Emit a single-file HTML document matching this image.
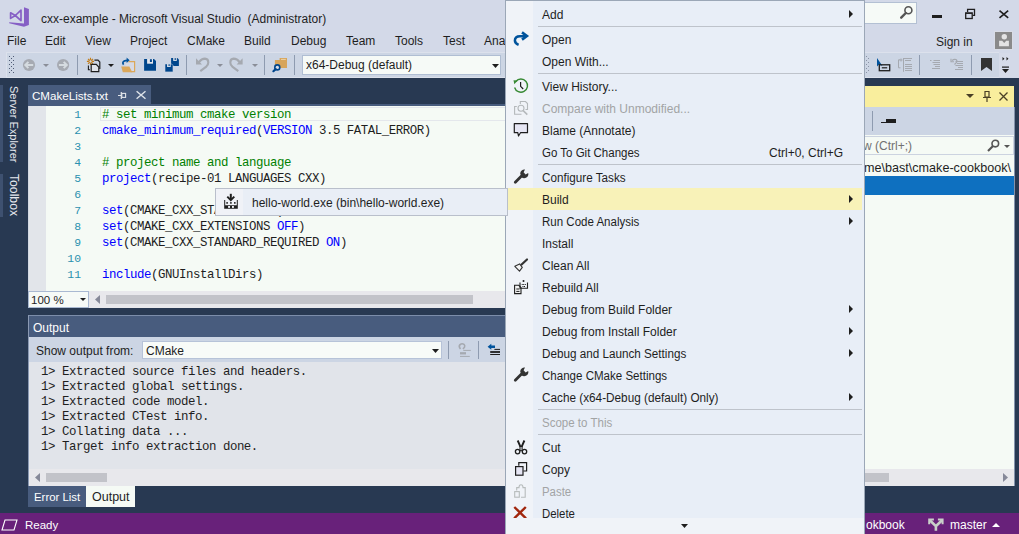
<!DOCTYPE html>
<html><head><meta charset="utf-8">
<style>
html,body{margin:0;padding:0}
body{width:1019px;height:534px;overflow:hidden;position:relative;background:#D3D9E8;font-family:"Liberation Sans",sans-serif}
.a{position:absolute}
.t{position:absolute;font-size:12px;white-space:pre;line-height:14px;color:#1E1E1E}
.m{position:absolute;font-family:"Liberation Mono",monospace;font-size:12.4px;letter-spacing:-0.44px;white-space:pre;line-height:16px;color:#1E1E1E}
svg{position:absolute;overflow:visible}
.kw{color:#0000FF}
.cm{color:#008000}
</style></head><body>

<!-- ===== TITLE BAR ===== -->
<svg style="left:0;top:0" width="34" height="30" viewBox="0 0 34 30">
  <path d="M24 7.2 L28.9 9 L28.9 25 L24 26.8 L9.2 23.2 L9.2 22.3 L24 23.4 Z" fill="#865FC5"/>
  <path d="M10.6 12.8 L10.6 18.4 L15.3 15.5 Z M21 10.2 L21 20.6 L15.3 15.5 Z" fill="none" stroke="#865FC5" stroke-width="1.7" stroke-linejoin="round"/>
</svg>
<div class="t" style="left:41px;top:12px;color:#1E1E1E">cxx-example - Microsoft Visual Studio  (Administrator)</div>

<!-- search box (partially visible) -->
<div class="a" style="left:850px;top:2px;width:67px;height:22px;background:#F6FAF7;border:1px solid #B3C0D3;box-sizing:border-box"></div>
<svg style="left:0;top:0" width="1019" height="30" viewBox="0 0 1019 30">
  <circle cx="908.4" cy="10.3" r="3.5" fill="none" stroke="#555" stroke-width="1.6"/>
  <path d="M905.8 13 L901.2 17.7" stroke="#555" stroke-width="2.4" stroke-linecap="round"/>
</svg>
<!-- window buttons -->
<div class="a" style="left:932px;top:15px;width:10px;height:3px;background:#1E1E1E"></div>
<svg style="left:0;top:0" width="1019" height="30" viewBox="0 0 1019 30">
  <path d="M967.6 12 V9.4 H974.5 V15.3 H972.6" fill="none" stroke="#1E1E1E" stroke-width="1.3"/>
  <rect x="965.7" y="12.9" width="6.5" height="5.6" fill="none" stroke="#1E1E1E" stroke-width="1.3"/>
  <path d="M965.7 13.4 H972.2" stroke="#1E1E1E" stroke-width="1"/>
</svg>
<svg style="left:0;top:0" width="1019" height="30" viewBox="0 0 1019 30">
  <path d="M999.5 10.6 L1008.2 17.9 M1008.2 10.6 L999.5 17.9" stroke="#1E1E1E" stroke-width="1.6"/>
</svg>

<!-- ===== MENU BAR ===== -->
<div class="t" style="left:7px;top:34px">File</div>
<div class="t" style="left:45px;top:34px">Edit</div>
<div class="t" style="left:85px;top:34px">View</div>
<div class="t" style="left:130px;top:34px">Project</div>
<div class="t" style="left:187px;top:34px">CMake</div>
<div class="t" style="left:244px;top:34px">Build</div>
<div class="t" style="left:291px;top:34px">Debug</div>
<div class="t" style="left:346px;top:34px">Team</div>
<div class="t" style="left:395px;top:34px">Tools</div>
<div class="t" style="left:443px;top:34px">Test</div>
<div class="t" style="left:484px;top:34px">Analyze</div>
<div class="t" style="left:936px;top:35px">Sign in</div>
<div class="a" style="left:994px;top:31px;width:19px;height:19px;background:#D9DDE6"></div>
<div class="a" style="left:995px;top:32px;width:17px;height:17px;background:#8A8A8A"></div>
<svg style="left:0;top:0" width="1019" height="60" viewBox="0 0 1019 60">
  <circle cx="1004.3" cy="36.8" r="2.7" fill="#E4E4E4"/>
  <path d="M999.1 40.7 H1002.2 L1004.2 43 L1006.2 40.7 H1008.9 V46.3 H999.1 Z" fill="#E4E4E4"/>
</svg>

<!-- ===== TOOLBAR ===== -->
<div class="a" style="left:6px;top:52px;width:993px;height:26px;background:#DCE1EC"></div>
<div class="a" style="left:7px;top:53px;width:992px;height:24px;background:#CCD5E4"></div>
<div class="a" style="left:999px;top:53px;width:11px;height:24px;background:#D6DBE9"></div>

<!-- toolbar icons -->
<svg style="left:0;top:0" width="20" height="80" viewBox="0 0 20 80"><g fill="#4F5B75"><rect x="9" y="56" width="1" height="1"/><rect x="13" y="56" width="1" height="1"/><rect x="11" y="58" width="1" height="1"/><rect x="9" y="60" width="1" height="1"/><rect x="13" y="60" width="1" height="1"/><rect x="11" y="62" width="1" height="1"/><rect x="9" y="64" width="1" height="1"/><rect x="13" y="64" width="1" height="1"/><rect x="11" y="66" width="1" height="1"/><rect x="9" y="68" width="1" height="1"/><rect x="13" y="68" width="1" height="1"/><rect x="11" y="70" width="1" height="1"/><rect x="9" y="72" width="1" height="1"/><rect x="13" y="72" width="1" height="1"/></g></svg>
<svg style="left:0;top:0" width="100" height="80" viewBox="0 0 100 80">
  <circle cx="29" cy="65" r="6.1" fill="#A6AAB2"/>
  <path d="M25.5 65 H33.2 M28.4 61.9 L25.3 65 L28.4 68.1" fill="none" stroke="#D5DBE0" stroke-width="2"/>
  <circle cx="63.1" cy="65" r="6.1" fill="#A6AAB2"/>
  <path d="M66.6 65 H58.9 M63.7 61.9 L66.8 65 L63.7 68.1" fill="none" stroke="#D5DBE0" stroke-width="2"/>
</svg>
<svg style="left:43px;top:64px" width="6" height="3" viewBox="0 0 6 3"><path d="M0 0 H6 L3 3 Z" fill="#8A8E98"/></svg>

<div class="a" style="left:77px;top:55px;width:1px;height:20px;background:#8E9BB0"></div>
<svg style="left:0;top:0" width="200" height="80" viewBox="0 0 200 80">
  <g stroke="#C27D1A" stroke-width="1.1"><path d="M90.5 57.8 V65 M86.9 61.4 H94.1 M88 58.9 L93 63.9 M93 58.9 L88 63.9"/></g>
  <circle cx="90.5" cy="61.4" r="1.6" fill="#CCD5E4" stroke="#C27D1A" stroke-width="1"/>
  <path d="M94.4 60.2 H98 L99.8 62 V69" fill="none" stroke="#1E1E1E" stroke-width="1.2"/>
  <path d="M91.2 64.4 H96.2 L98.8 67 V71.7 H91.2 Z" fill="#E0E3EA" stroke="#1E1E1E" stroke-width="1.2"/>
  <path d="M88.4 65.5 V69.7 H90" fill="none" stroke="#1E1E1E" stroke-width="1.1"/>
</svg>
<svg style="left:108px;top:64px" width="6" height="3" viewBox="0 0 6 3"><path d="M0 0 H6 L3 3 Z" fill="#1E1E1E"/></svg>
<svg style="left:0;top:0" width="200" height="80" viewBox="0 0 200 80">
  <path d="M128.5 61.6 H134.6 V71.6 H130.5" fill="#D6DAE6" stroke="#DCA85A" stroke-width="1.2"/>
  <path d="M125.5 63.2 H128.8 V66.8 H125.5 Z" fill="#D6DAE6"/>
  <path d="M121.2 66.6 H129.3 L132.3 72.2 H122.8 Z" fill="#DCA85A"/>
  <path d="M123.6 64.6 Q121.8 62.5 124.3 61 Q125.5 60.3 127.5 60.3" fill="none" stroke="#00539C" stroke-width="1.7"/>
  <path d="M126.6 57.6 L129.6 60.3 L126.6 63 Z" fill="#00539C"/>
</svg>
<svg style="left:0;top:0" width="300" height="80" viewBox="0 0 300 80">
  <path d="M144.1 59 H154 L156 61 V70.8 H144.1 Z" fill="#00468C"/>
  <rect x="147.1" y="59" width="5.9" height="4.7" fill="#E4E6EC"/>
  <rect x="149.9" y="59.2" width="2" height="2.8" fill="#00468C"/>
</svg>
<svg style="left:0;top:0" width="300" height="80" viewBox="0 0 300 80">
  <path d="M171.1 57.9 H177.4 L178.9 59.4 V65.9 H171.1 Z" fill="#00468C"/>
  <rect x="173.2" y="57.9" width="3.6" height="3" fill="#E4E6EC"/><rect x="174.6" y="58.1" width="1.2" height="1.9" fill="#00468C"/>
  <path d="M165 63.9 H171.5 L173 65.4 V71.9 H165 Z" fill="#00468C" stroke="#CCD5E4" stroke-width="0.6"/>
  <rect x="167.1" y="64" width="3.6" height="3" fill="#E4E6EC"/><rect x="168.5" y="64.2" width="1.2" height="1.9" fill="#00468C"/>
</svg>
<div class="a" style="left:186px;top:55px;width:1px;height:20px;background:#8E9BB0"></div>
<svg style="left:0;top:0" width="300" height="80" viewBox="0 0 300 80">
  <g>
  <path d="M198.8 62.3 Q201.5 58.6 205 58.6 Q208.3 58.8 208.3 62.4 Q208.3 64.6 206.3 66.6 L200.3 71.2" fill="none" stroke="#A5A9B0" stroke-width="2.1"/>
  <path d="M196 58.2 L196 64.4 L202 64.4 Z" fill="#A5A9B0"/>
  </g>
</svg>
<svg style="left:217px;top:64px" width="6" height="3" viewBox="0 0 6 3"><path d="M0 0 H6 L3 3 Z" fill="#8A8E98"/></svg>
<svg style="left:0;top:0" width="300" height="80" viewBox="0 0 300 80">
  <g transform="translate(438.6,0) scale(-1,1)">
  <path d="M198.8 62.3 Q201.5 58.6 205 58.6 Q208.3 58.8 208.3 62.4 Q208.3 64.6 206.3 66.6 L200.3 71.2" fill="none" stroke="#A5A9B0" stroke-width="2.1"/>
  <path d="M196 58.2 L196 64.4 L202 64.4 Z" fill="#A5A9B0"/>
  </g>
</svg>
<svg style="left:252px;top:64px" width="6" height="3" viewBox="0 0 6 3"><path d="M0 0 H6 L3 3 Z" fill="#8A8E98"/></svg>
<div class="a" style="left:264px;top:55px;width:1px;height:20px;background:#8E9BB0"></div>
<svg style="left:0;top:0" width="300" height="80" viewBox="0 0 300 80">
  <path d="M279.6 57.9 H287 V68 H274.9 V60 H279.6 Z" fill="#D7A55C"/>
  <rect x="281" y="58.9" width="4.8" height="1" fill="#ECD3A8"/>
  <circle cx="277.3" cy="67.4" r="2.5" fill="#DADDE5" stroke="#00468C" stroke-width="1.6"/>
  <path d="M275.6 69.1 L273.4 71.2" stroke="#00468C" stroke-width="2.2" stroke-linecap="round"/>
</svg>
<div class="a" style="left:294px;top:55px;width:1px;height:20px;background:#8E9BB0"></div>
<div class="a" style="left:302px;top:55px;width:199px;height:20px;background:#F6FAF7;border:1px solid #B0BED3;box-sizing:border-box"></div>
<div class="t" style="left:306px;top:58px">x64-Debug (default)</div>
<svg style="left:492px;top:64px" width="7" height="4" viewBox="0 0 7 4"><path d="M0 0 H7 L3.5 4 Z" fill="#1E1E1E"/></svg>

<!-- right toolbar icons -->
<svg style="left:866px;top:56px" width="4" height="18" viewBox="0 0 4 18"><g fill="#8A93A6"><rect x="0" y="0" width="1" height="1"/><rect x="2" y="2" width="1" height="1"/><rect x="0" y="4" width="1" height="1"/><rect x="2" y="6" width="1" height="1"/><rect x="0" y="8" width="1" height="1"/><rect x="2" y="10" width="1" height="1"/><rect x="0" y="12" width="1" height="1"/><rect x="2" y="14" width="1" height="1"/><rect x="0" y="16" width="1" height="1"/></g></svg>
<svg style="left:876px;top:58px" width="16" height="14" viewBox="0 0 16 14">
  <path d="M1 0 L1 8.5 L3 6.5 L6.5 8 Z" fill="#00539C"/>
  <rect x="3.3" y="6.8" width="10.4" height="5.9" fill="none" stroke="#1E1E1E" stroke-width="1.3"/>
  <path d="M5.8 9.8 H11.2" stroke="#1E1E1E" stroke-width="1.2"/>
</svg>
<svg style="left:0;top:0" width="1019" height="80" viewBox="0 0 1019 80">
 <g stroke="#A5A9B0" stroke-width="1" fill="none">
  <path d="M900 59.8 H898.5 V67.8 H900.5"/>
  <path d="M901 58.5 V61.5 M899.5 60 H902.5"/>
  <path d="M903.5 58 V71.8 M903.5 58.5 H912"/>
  <path d="M905 60.5 H911 M905 64.5 H912 M905 66.5 H912 M905 68.5 H912 M905 70.5 H912"/>
  <path d="M930 60.5 H931.5 M933.5 60.5 H940 M932.5 62.5 H940 M933.5 64.5 H940 M935 66.5 H940 M932 68.5 H940"/>
  <path d="M955.5 61.5 H963 M957 63.5 H963 M955.5 65.5 H963 M958 67.5 H963 M955 69.5 H963"/>
  <path d="M952 60.5 Q954 58.8 956 59.5 Q957.5 60.5 956.5 62.5 L954.5 64.5" stroke-width="1.2"/>
  <path d="M951 58.8 V61.8 H954" stroke-width="1.1"/>
 </g>
</svg>
<div class="a" style="left:919px;top:55px;width:1px;height:20px;background:#8E9BB0"></div>


<div class="a" style="left:971px;top:55px;width:1px;height:20px;background:#8E9BB0"></div>
<svg style="left:981px;top:58px" width="11" height="13" viewBox="0 0 11 13"><path d="M0 0 H11 V13 L5.5 9 L0 13 Z" fill="#333"/></svg>
<svg style="left:1001px;top:56px" width="9" height="20" viewBox="0 0 9 20">
  <path d="M1.5 1 L3.5 2.8 L1.5 4.6 Z M5.5 1 L7.5 2.8 L5.5 4.6 Z" fill="#1E1E1E"/>
  <rect x="1" y="10.5" width="7" height="1.2" fill="#1E1E1E"/><path d="M1 13 H8 L4.5 17 Z" fill="#1E1E1E"/>
</svg>

<!-- ===== DARK WELL ===== -->
<div class="a" style="left:0;top:78px;width:1019px;height:435px;background:#283952"></div>

<!-- left auto-hide tabs -->
<div class="a" style="left:0;top:85px;width:3px;height:77px;background:#3E5170"></div>
<div class="a" style="left:0;top:174px;width:3px;height:43px;background:#3E5170"></div>
<div class="t" style="left:21px;top:86px;color:#E6E8EE;font-size:11px;transform-origin:0 0;transform:rotate(90deg)">Server Explorer</div>
<div class="t" style="left:21px;top:174px;color:#E6E8EE;font-size:12.2px;transform-origin:0 0;transform:rotate(90deg)">Toolbox</div>

<!-- ===== DOCUMENT TAB ===== -->
<div class="a" style="left:28px;top:85px;width:123px;height:19px;background:#485C7E"></div>
<div class="a" style="left:28px;top:104px;width:840px;height:2px;background:#485C7E"></div>
<div class="t" style="left:32px;top:89px;color:#FFFFFF;font-size:11.6px">CMakeLists.txt</div>
<svg style="left:0;top:0" width="200" height="110" viewBox="0 0 200 110">
  <path d="M118 95.5 H121.3 M121.3 92 V99" stroke="#E0E4E8" stroke-width="1.2"/>
  <rect x="121.8" y="93.4" width="3.8" height="4" fill="none" stroke="#E0E4E8" stroke-width="1.1"/>
</svg>
<svg style="left:0;top:0" width="200" height="110" viewBox="0 0 200 110">
  <path d="M136.6 91.2 L145.5 98.7 M145.5 91.2 L136.6 98.7" stroke="#DDE2E8" stroke-width="1.5"/>
</svg>


<!-- ===== EDITOR ===== -->
<div class="a" style="left:28px;top:106px;width:840px;height:185px;background:#F5FAF5"></div>
<div class="a" style="left:28px;top:106px;width:18px;height:185px;background:#E2E5EA"></div>
<div class="a" style="left:28px;top:106px;width:1px;height:185px;background:#D3D9E3"></div>
<div class="a" style="left:100px;top:107px;width:770px;height:14px;border:1px solid #E4E7EC;box-sizing:border-box"></div>
<div class="m" style="left:46px;top:107px;width:35.2px;text-align:right;color:#2B91AF;font-size:11.4px;letter-spacing:0.16px">1
2
3
4
5
6
7
8
9
10
11</div>
<div class="m" style="left:102px;top:107px"><span class="cm"># set minimum cmake version</span>
<span class="kw">cmake_minimum_required</span>(<span class="kw">VERSION</span> 3.5 FATAL_ERROR)

<span class="cm"># project name and language</span>
<span class="kw">project</span>(recipe-01 LANGUAGES CXX)

<span class="kw">set</span>(CMAKE_CXX_STANDARD 11)
<span class="kw">set</span>(CMAKE_CXX_EXTENSIONS <span class="kw">OFF</span>)
<span class="kw">set</span>(CMAKE_CXX_STANDARD_REQUIRED <span class="kw">ON</span>)

<span class="kw">include</span>(GNUInstallDirs)</div>
<!-- editor bottom bar -->
<div class="a" style="left:28px;top:291px;width:840px;height:17px;background:#E8E8EC"></div>
<div class="a" style="left:28px;top:291px;width:61px;height:17px;background:#F6FAF7;border:1px solid #A9B9D2;box-sizing:border-box"></div>
<div class="t" style="left:31px;top:293px;font-size:11.5px">100 %</div>
<svg style="left:80px;top:298px" width="6" height="3" viewBox="0 0 6 3"><path d="M0 0 H6 L3 3 Z" fill="#1E1E1E"/></svg>
<svg style="left:95px;top:295px" width="5" height="9" viewBox="0 0 5 9"><path d="M5 0 V9 L0 4.5 Z" fill="#868999"/></svg>
<div class="a" style="left:106px;top:295px;width:367px;height:9px;background:#C2C3C9"></div>

<!-- ===== OUTPUT PANEL ===== -->
<div class="a" style="left:28px;top:315px;width:840px;height:1px;background:#7C8DAA"></div>
<div class="a" style="left:28px;top:316px;width:840px;height:21px;background:#485C7E"></div>
<div class="t" style="left:33px;top:321px;color:#FFFFFF">Output</div>
<div class="a" style="left:28px;top:337px;width:840px;height:25px;background:#CCD5E4"></div>
<div class="t" style="left:36px;top:344px">Show output from:</div>
<div class="a" style="left:142px;top:341px;width:300px;height:18px;background:#F8FBF8;border:1px solid #B7C3D8;box-sizing:border-box"></div>
<div class="t" style="left:146px;top:344px">CMake</div>
<svg style="left:432px;top:349px" width="7" height="4" viewBox="0 0 7 4"><path d="M0 0 H7 L3.5 4 Z" fill="#1E1E1E"/></svg>
<div class="a" style="left:448px;top:341px;width:1px;height:18px;background:#8E9BB0"></div>
<svg style="left:0;top:0" width="520" height="370" viewBox="0 0 520 370">
  <g fill="none" stroke="#A5A9B0">
  <path d="M460.5 349 Q458.3 346.5 460 344.6 Q462 343 464 344.3 Q465.2 345.5 464.5 347.2 L463 349" stroke-width="1.6"/>
  <path d="M463.3 350.4 H470.8 M460 356.4 H469.8" stroke-width="1"/>
  <path d="M460 353.3 H466" stroke-width="2.3"/>
  </g>
</svg>
<div class="a" style="left:478px;top:341px;width:1px;height:18px;background:#8E9BB0"></div>
<svg style="left:0;top:0" width="520" height="370" viewBox="0 0 520 370">
  <path d="M487.6 346.8 L491.3 343.8 V345.6 H495 V348 H491.3 V349.8 Z" fill="#00539C"/>
  <path d="M494.4 349.4 H500 M490.2 354.5 H500" stroke="#1E1E1E" stroke-width="1"/>
  <path d="M490.2 352 H500" stroke="#1E1E1E" stroke-width="1.8"/>
</svg>
<div class="a" style="left:28px;top:362px;width:840px;height:107px;background:#E1E4EA"></div>
<div class="m" style="left:41px;top:365px;line-height:15px;color:#1E1E1E">1&gt; Extracted source files and headers.
1&gt; Extracted global settings.
1&gt; Extracted code model.
1&gt; Extracted CTest info.
1&gt; Collating data ...
1&gt; Target info extraction done.</div>
<div class="a" style="left:28px;top:469px;width:840px;height:17px;background:#E8E8EC"></div>
<svg style="left:35px;top:473px" width="5" height="9" viewBox="0 0 5 9"><path d="M5 0 V9 L0 4.5 Z" fill="#868999"/></svg>
<div class="a" style="left:46px;top:473px;width:61px;height:9px;background:#C2C3C9"></div>
<div class="a" style="left:28px;top:315px;width:1px;height:171px;background:#8A99B3"></div>
<!-- bottom tabs -->
<div class="a" style="left:28px;top:486px;width:58px;height:21px;background:#485C7E"></div>
<div class="t" style="left:34px;top:490px;color:#FFFFFF;font-size:11.4px">Error List</div>
<div class="a" style="left:86px;top:486px;width:49px;height:21px;background:#F5FAF5"></div>
<div class="t" style="left:92px;top:490px;color:#1E1E1E;font-size:12.5px">Output</div>

<!-- ===== STATUS BAR ===== -->
<div class="a" style="left:0;top:513px;width:1019px;height:21px;background:#68217A"></div>
<svg style="left:1px;top:519px" width="17" height="12" viewBox="0 0 17 12">
  <path d="M4 1 H16 L13 11 H1 Z" fill="none" stroke="#FFFFFF" stroke-width="1.1"/>
</svg>
<div class="t" style="left:25px;top:518px;color:#FFFFFF;font-size:11.5px">Ready</div>
<div class="t" style="left:866px;top:518px;color:#FFFFFF">okbook</div>
<svg style="left:0;top:500px" width="1019" height="34" viewBox="0 500 1019 34">
  <g fill="none" stroke="#C9CFC9">
  <path d="M929.8 520.3 L935.9 526.3 L942 520.3 M935.9 526 V530.8" stroke-width="2.6"/>
  <path d="M929.2 524.3 V519.6 H933.9 M942.6 524.3 V519.6 H937.9" stroke-width="2"/>
  </g>
</svg>
<div class="t" style="left:950px;top:518px;color:#FFFFFF">master</div>
<svg style="left:992px;top:523px" width="8" height="4" viewBox="0 0 8 4"><path d="M0 4 H8 L4 0 Z" fill="#FFFFFF"/></svg>


<!-- ===== RIGHT TOOL WINDOW (Solution Explorer) ===== -->
<div class="a" style="left:865px;top:86px;width:149px;height:400px;background:#F5FAF5"></div>
<div class="a" style="left:865px;top:86px;width:149px;height:21px;background:#F9EE9D"></div>
<svg style="left:966px;top:94px" width="8" height="4" viewBox="0 0 8 4"><path d="M0 0 H8 L4 4 Z" fill="#4A4026"/></svg>
<svg style="left:983px;top:91px" width="8" height="11" viewBox="0 0 8 11">
  <path d="M2 0.5 H6 V6 H2 Z M0 6.5 H8 M4 7 V11" fill="none" stroke="#4A4026" stroke-width="1.2"/>
</svg>
<svg style="left:999px;top:92px" width="9" height="9" viewBox="0 0 9 9">
  <path d="M0.5 0.5 L8.5 8.5 M8.5 0.5 L0.5 8.5" stroke="#4A4026" stroke-width="1.3"/>
</svg>
<div class="a" style="left:865px;top:107px;width:149px;height:28px;background:#CCD5E4"></div>
<div class="a" style="left:872px;top:111px;width:1px;height:20px;background:#8E9BB0"></div>
<svg style="left:881px;top:119px" width="15" height="4" viewBox="0 0 15 4"><path d="M0 3.5 H15" stroke="#1E1E1E" stroke-width="1"/><rect x="5" y="0" width="10" height="4" fill="#1E1E1E"/></svg>
<div class="a" style="left:865px;top:136px;width:149px;height:19px;background:#F5FAF5;border:1px solid #CCD3E0;border-left:none;box-sizing:border-box"></div>
<div class="t" style="right:107px;top:139px;color:#717171">Search Folder View (Ctrl+;)</div>
<svg style="left:987px;top:139px" width="13" height="13" viewBox="0 0 13 13">
  <circle cx="8.3" cy="4.6" r="3.3" fill="none" stroke="#555" stroke-width="1.6"/>
  <path d="M6 7 L1 12" stroke="#555" stroke-width="2.2"/>
</svg>
<svg style="left:1004px;top:145px" width="6" height="3" viewBox="0 0 6 3"><path d="M0 0 H6 L3 3 Z" fill="#555"/></svg>
<div class="t" style="right:8px;top:161px;color:#1E1E1E;font-size:12.6px">C:\Users\home\bast\cmake-cookbook\</div>
<div class="a" style="left:865px;top:176px;width:149px;height:19px;background:#0E70C0"></div>
<div class="a" style="left:865px;top:469px;width:149px;height:17px;background:#E8E8EC"></div>
<div class="a" style="left:1014px;top:107px;width:1px;height:379px;background:#8493AC"></div>
<div class="a" style="left:865px;top:473px;width:24px;height:9px;background:#C2C3C9"></div>
<svg style="left:1003px;top:473px" width="5" height="9" viewBox="0 0 5 9"><path d="M0 0 V9 L5 4.5 Z" fill="#868999"/></svg>

<!-- ===== CONTEXT MENU ===== -->
<div class="a" style="left:505px;top:0;width:360px;height:536px;background:#E8EEF7;border:1px solid #9BA7B7;box-sizing:border-box"></div>
<div class="a" style="left:506px;top:1px;width:27px;height:517px;background:#F0F3F8"></div>
<div class="t" style="left:542px;top:8px;color:#1E1E1E">Add</div>
<svg style="left:849px;top:10px" width="4" height="8" viewBox="0 0 4 8"><path d="M0 0 L4 4 L0 8 Z" fill="#1E1E1E"/></svg>
<div class="a" style="left:538px;top:26px;width:324px;height:1px;background:#BEC3CB"></div>
<div class="t" style="left:542px;top:33px;color:#1E1E1E">Open</div>
<div class="t" style="left:542px;top:55px;color:#1E1E1E">Open With...</div>
<div class="a" style="left:538px;top:73px;width:324px;height:1px;background:#BEC3CB"></div>
<div class="t" style="left:542px;top:80px;color:#1E1E1E">View History...</div>
<div class="t" style="left:542px;top:102px;color:#A2A4A5">Compare with Unmodified...</div>
<div class="t" style="left:542px;top:124px;color:#1E1E1E">Blame (Annotate)</div>
<div class="t" style="left:542px;top:146px;color:#1E1E1E;transform-origin:0 0;transform:scaleX(0.958)">Go To Git Changes</div>
<div class="t" style="left:769px;top:146px;color:#1E1E1E">Ctrl+0, Ctrl+G</div>
<div class="a" style="left:538px;top:164px;width:324px;height:1px;background:#BEC3CB"></div>
<div class="t" style="left:542px;top:171px;color:#1E1E1E;transform-origin:0 0;transform:scaleX(0.974)">Configure Tasks</div>
<div class="a" style="left:508px;top:188px;width:354px;height:22px;background:#F8F2B8"></div>
<div class="t" style="left:542px;top:193px;color:#1E1E1E">Build</div>
<svg style="left:849px;top:195px" width="4" height="8" viewBox="0 0 4 8"><path d="M0 0 L4 4 L0 8 Z" fill="#1E1E1E"/></svg>
<div class="t" style="left:542px;top:215px;color:#1E1E1E;transform-origin:0 0;transform:scaleX(0.96)">Run Code Analysis</div>
<svg style="left:849px;top:217px" width="4" height="8" viewBox="0 0 4 8"><path d="M0 0 L4 4 L0 8 Z" fill="#1E1E1E"/></svg>
<div class="t" style="left:542px;top:237px;color:#1E1E1E">Install</div>
<div class="t" style="left:542px;top:259px;color:#1E1E1E">Clean All</div>
<div class="t" style="left:542px;top:281px;color:#1E1E1E">Rebuild All</div>
<div class="t" style="left:542px;top:303px;color:#1E1E1E">Debug from Build Folder</div>
<svg style="left:849px;top:305px" width="4" height="8" viewBox="0 0 4 8"><path d="M0 0 L4 4 L0 8 Z" fill="#1E1E1E"/></svg>
<div class="t" style="left:542px;top:325px;color:#1E1E1E">Debug from Install Folder</div>
<svg style="left:849px;top:327px" width="4" height="8" viewBox="0 0 4 8"><path d="M0 0 L4 4 L0 8 Z" fill="#1E1E1E"/></svg>
<div class="t" style="left:542px;top:347px;color:#1E1E1E;transform-origin:0 0;transform:scaleX(0.974)">Debug and Launch Settings</div>
<svg style="left:849px;top:349px" width="4" height="8" viewBox="0 0 4 8"><path d="M0 0 L4 4 L0 8 Z" fill="#1E1E1E"/></svg>
<div class="t" style="left:542px;top:369px;color:#1E1E1E;transform-origin:0 0;transform:scaleX(0.962)">Change CMake Settings</div>
<div class="t" style="left:542px;top:391px;color:#1E1E1E;transform-origin:0 0;transform:scaleX(0.98)">Cache (x64-Debug (default) Only)</div>
<svg style="left:849px;top:393px" width="4" height="8" viewBox="0 0 4 8"><path d="M0 0 L4 4 L0 8 Z" fill="#1E1E1E"/></svg>
<div class="a" style="left:538px;top:409px;width:324px;height:1px;background:#BEC3CB"></div>
<div class="t" style="left:542px;top:416px;color:#A2A4A5;transform-origin:0 0;transform:scaleX(0.96)">Scope to This</div>
<div class="a" style="left:538px;top:434px;width:324px;height:1px;background:#BEC3CB"></div>
<div class="t" style="left:542px;top:441px;color:#1E1E1E">Cut</div>
<div class="t" style="left:542px;top:463px;color:#1E1E1E">Copy</div>
<div class="t" style="left:542px;top:485px;color:#A2A4A5;transform-origin:0 0;transform:scaleX(0.95)">Paste</div>
<div class="t" style="left:542px;top:507px;color:#1E1E1E;transform-origin:0 0;transform:scaleX(0.95)">Delete</div>
<svg style="left:0;top:0" width="1019" height="534" viewBox="0 0 1019 534">
 <!-- open -->
 <path d="M526 36.2 H520 Q514.9 36.2 514.9 40.6 Q514.9 43.4 518.6 44.9" fill="none" stroke="#00539C" stroke-width="2.5"/>
 <path d="M522 32.4 L526.9 36 L522 39.6" fill="none" stroke="#00539C" stroke-width="2.6"/>
 <!-- history -->
 <path d="M515.8 81.5 A6.6 6.6 0 1 1 514.6 87.5" fill="none" stroke="#388A34" stroke-width="1.4"/>
 <path d="M513.5 80.3 L517.8 80.6 L514.3 84.3 Z" fill="#388A34"/>
 <path d="M520.6 82 V86.3 L523.2 89" fill="none" stroke="#1E1E1E" stroke-width="1.2"/>
 <!-- compare (disabled) -->
 <g fill="none" stroke="#B4B8BB" stroke-width="1.1">
 <path d="M520.3 104 V101.5 H525.5 L527.5 103.5 V109.5 H525.5"/>
 <path d="M516.8 106.5 H514.6 V114.3 H521.5"/>
 <circle cx="521" cy="108.3" r="3"/>
 <path d="M523.2 110.6 L527.3 114.6" stroke-width="1.5"/>
 </g>
 <!-- blame -->
 <path d="M514.3 123.6 H527.5 V132.7 H520.5 L518.5 136 L517.8 132.7 H514.3 Z" fill="#E6E6F4" stroke="#1E1E1E" stroke-width="1.2" stroke-linejoin="round"/>
 <!-- wrench configure -->
 <g transform="translate(0,0)"><path d="M515.3 182.3 L521.5 176.1" stroke="#333" stroke-width="2.8" stroke-linecap="round"/>
 <path d="M520.2 173.6 A4.2 4.2 0 0 1 525 169.6 L523.6 172.2 L525.6 174.4 L528.2 172.9 A4.2 4.2 0 0 1 521.5 177.2 Z" fill="#333"/></g>
 <!-- clean all -->
 <path d="M527 259.5 L521.6 264.5" stroke="#333" stroke-width="2.2" stroke-linecap="round"/>
 <path d="M514.8 266.3 L519.6 263.9 L522.3 267.4 L519.5 271.2 Z" fill="#F4F4F4" stroke="#333" stroke-width="1.1" stroke-linejoin="round"/>
 <!-- rebuild all -->
 <path d="M514.6 285.3 H518.8 L521 287.5 V293.6 H514.6 Z" fill="#F4F4F4" stroke="#1E1E1E" stroke-width="1.1"/>
 <path d="M516.3 289 H519.5 M516.3 291.4 H519.5" stroke="#1E1E1E" stroke-width="1"/>
 <path d="M520 282.5 V288.3 H527.5 V282.5" fill="none" stroke="#1E1E1E" stroke-width="1.1"/>
 <g fill="#1E1E1E"><circle cx="523.5" cy="281" r="1"/><rect x="521.7" y="284" width="1" height="1"/><rect x="523.2" y="284" width="1" height="1"/><rect x="524.8" y="284" width="1" height="1"/><rect x="522.5" y="286" width="1" height="1"/><rect x="524" y="286" width="1" height="1"/></g>
 <!-- wrench change cmake -->
 <g transform="translate(0,198)"><path d="M515.3 182.3 L521.5 176.1" stroke="#333" stroke-width="2.8" stroke-linecap="round"/>
 <path d="M520.2 173.6 A4.2 4.2 0 0 1 525 169.6 L523.6 172.2 L525.6 174.4 L528.2 172.9 A4.2 4.2 0 0 1 521.5 177.2 Z" fill="#333"/></g>
 <!-- cut -->
 <g fill="none" stroke="#1E1E1E">
 <path d="M517.7 440.5 L520.4 446.6 M524.4 440.5 L521.7 446.6" stroke-width="1.9"/>
 <path d="M520 446.5 H522.1 V450.8 H520 Z" stroke-width="1.1"/>
 <circle cx="517.6" cy="451.6" r="2.2" stroke-width="1.3"/><circle cx="524.5" cy="451.6" r="2.2" stroke-width="1.3"/>
 </g>
 <!-- copy -->
 <path d="M518.8 465.8 V462.6 H526.6 V471 H523.4" fill="none" stroke="#1E1E1E" stroke-width="1.2"/>
 <rect x="515.6" y="466.6" width="7.4" height="8.6" fill="#E6E6F4" stroke="#1E1E1E" stroke-width="1.2"/>
 <!-- paste disabled -->
 <g fill="none" stroke="#B7BCBC" stroke-width="1.1">
 <path d="M516.7 490.5 V487.6 H519 Q519 484.8 521 484.8 Q523 484.8 523 487.6 H525.2 V497.2 H521"/>
 <rect x="514.7" y="491.6" width="4.6" height="5.6"/>
 </g>
 <!-- delete -->
 <path d="M514.3 507 L526 518.4 M525.8 507 L514.2 518.4" stroke="#A1260D" stroke-width="2.4"/>
</svg>
<div class="a" style="left:506px;top:518px;width:358px;height:16px;background:#F0F3F8"></div>
<svg style="left:681px;top:524px" width="7" height="4" viewBox="0 0 7 4"><path d="M0 0 H7 L3.5 4 Z" fill="#1E1E1E"/></svg>
<!-- ===== POPUP hello-world ===== -->
<div class="a" style="left:215px;top:188px;width:293px;height:28px;background:#E9EEF6;border:1px solid #B9BFCB;box-sizing:border-box"></div>
<div class="a" style="left:216px;top:189px;width:27px;height:26px;background:#F0F2F7"></div>
<svg style="left:0;top:0" width="260" height="220" viewBox="0 0 260 220">
  <path d="M230.8 193.8 V200" stroke="#1E1E1E" stroke-width="2"/>
  <path d="M227.3 196.6 L230.8 200.2 L234.3 196.6" fill="none" stroke="#1E1E1E" stroke-width="1.9"/>
  <path d="M224.2 200 H225.2 V205.3 H236.8 V200 H237.8 V208.8 H224.2 Z" fill="#1E1E1E"/>
  <rect x="226.3" y="202.1" width="1.6" height="1.6" fill="#1E1E1E"/>
  <rect x="230.1" y="202.1" width="1.6" height="1.6" fill="#1E1E1E"/>
  <rect x="234" y="202.1" width="1.6" height="1.6" fill="#1E1E1E"/>
  <rect x="228.1" y="206" width="1.9" height="1.9" fill="#F0F2F7"/>
  <rect x="232" y="206" width="1.9" height="1.9" fill="#F0F2F7"/>
</svg>
<div class="t" style="left:252px;top:196px">hello-world.exe (bin\hello-world.exe)</div>

</body></html>
